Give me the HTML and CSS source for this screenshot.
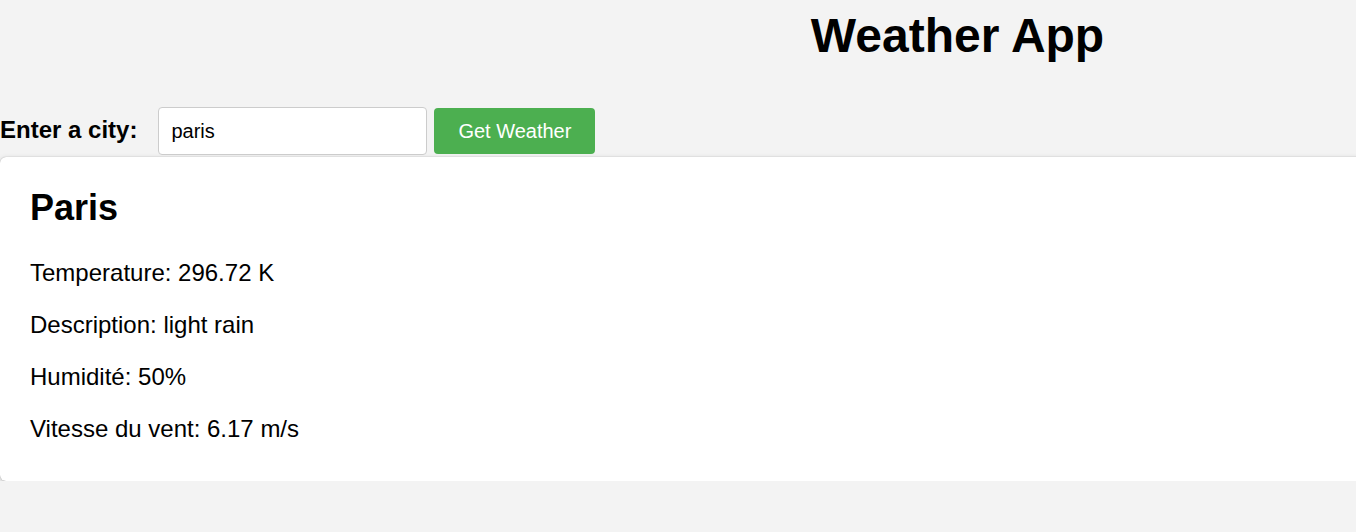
FILE: index.html
```html
<!DOCTYPE html>
<html lang="en">
<head>
<meta charset="utf-8">
<title>Weather App</title>
<link rel="stylesheet" href="styles.css">
</head>
<body>
<div class="app">
  <h1 class="title">Weather App</h1>
  <form class="search">
    <label class="search-label" for="city">Enter a city:</label>
    <input class="search-input" id="city" type="text" value="paris">
    <button class="search-btn" type="button">Get Weather</button>
  </form>
  <div class="card">
    <h2 class="card-title">Paris</h2>
    <p class="card-line">Temperature: 296.72 K</p>
    <p class="card-line">Description: light rain</p>
    <p class="card-line">Humidité: 50%</p>
    <p class="card-line">Vitesse du vent: 6.17 m/s</p>
  </div>
</div>
</body>
</html>
```

FILE: styles.css
```css
html, body {
  margin: 0;
  padding: 0;
  background: #f3f3f3;
}
body {
  font-family: "Liberation Sans", Arial, sans-serif;
  color: #000;
  overflow-x: hidden;
}
.app {
  width: 1915px;
}
.title {
  margin: 8px 0 44px;
  text-align: center;
  font-size: 48px;
  font-weight: bold;
}
.search {
  display: flex;
  align-items: baseline;
  margin: 0;
}
.search-label {
  font-size: 24px;
  font-weight: bold;
  margin-right: 21px;
}
.search-input {
  box-sizing: border-box;
  width: 269px;
  height: 48px;
  padding: 0 12px;
  border: 1px solid #ccc;
  border-radius: 4px;
  font-family: "Liberation Sans", Arial, sans-serif;
  font-size: 20px;
  color: #000;
  background: #fff;
  margin-right: 7px;
}
.search-btn {
  box-sizing: border-box;
  height: 46px;
  width: 161px;
  padding: 0;
  border: none;
  border-radius: 4px;
  background: #4caf50;
  color: #fff;
  font-family: "Liberation Sans", Arial, sans-serif;
  font-size: 20px;
}
.card {
  margin-top: 2px;
  background: #fff;
  border-radius: 6px;
  padding: 15px 30px 14px;
  box-shadow: 0 0 1px rgba(0, 0, 0, 0.35), 0 2px 6px rgba(0, 0, 0, 0.18);
}
.card-title {
  margin: 15px 0 30px;
  font-size: 36px;
  font-weight: bold;
}
.card-line {
  margin: 24px 0;
  font-size: 24px;
}
```
